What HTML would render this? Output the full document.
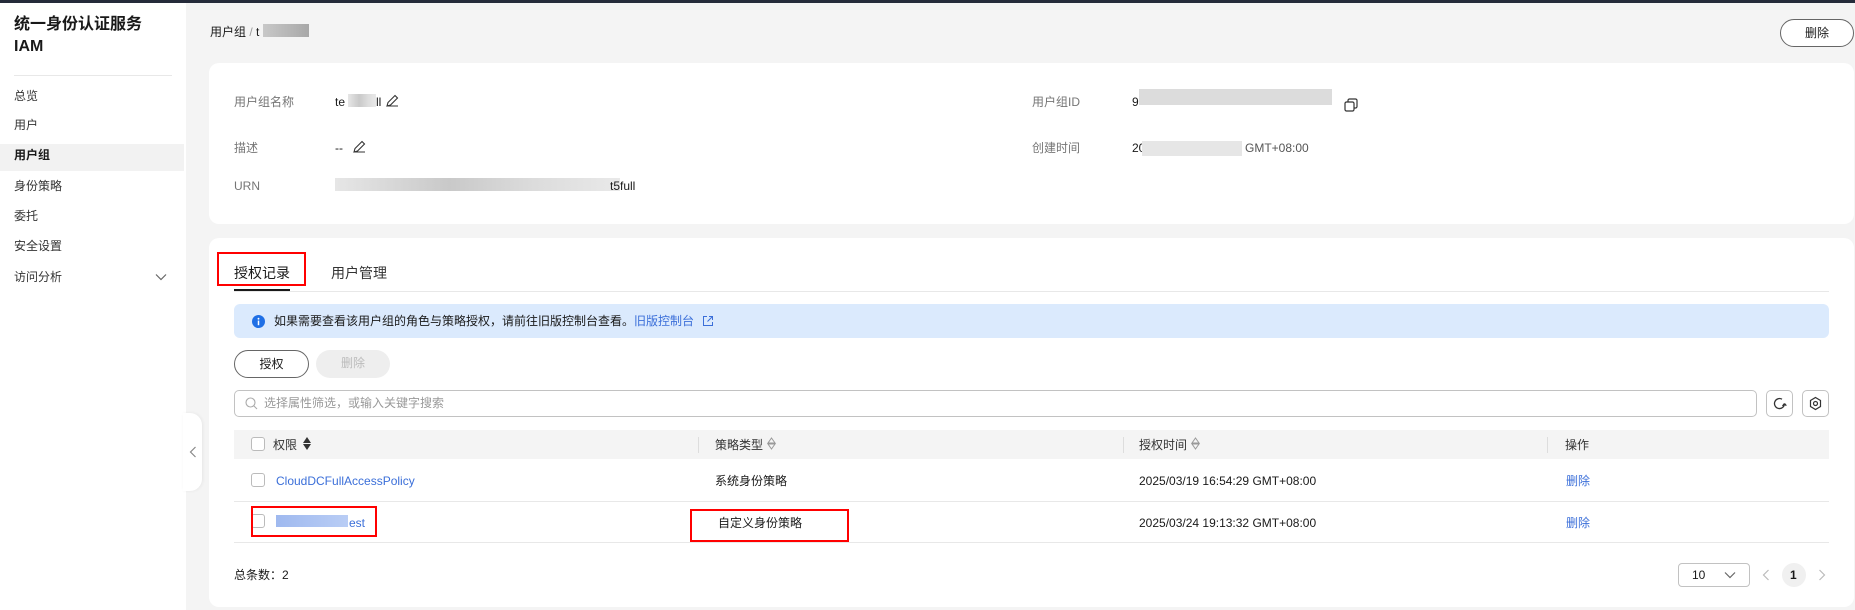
<!DOCTYPE html>
<html><head><meta charset="utf-8"><style>
*{margin:0;padding:0;box-sizing:border-box}
body{width:1855px;height:610px;overflow:hidden;background:#f4f4f4;font-family:"Liberation Sans","Noto Sans CJK SC",sans-serif;font-size:12px;color:#191919;position:relative}
.a{position:absolute;white-space:nowrap;line-height:1}
.top{position:absolute;left:0;top:0;width:1855px;height:3px;background:#252b3a}
.side{position:absolute;left:0;top:3px;width:186px;height:607px;background:#fff}
.nav{position:absolute;left:14px;font-size:12px;color:#333;transform:translateY(-50%)}
.card{position:absolute;background:#fff;border-radius:10px}
.lbl{color:#757575}
.blur{position:absolute;background:linear-gradient(90deg,#e6e6e6,#c9c9c9 40%,#dcdcdc 70%,#e9e9e9);}
.btn{position:absolute;border:1px solid #666;border-radius:16px;background:#fff;text-align:center}
.link{color:#3b6fd9}
.red{position:absolute;border:2px solid #f00}
.cb{position:absolute;width:14px;height:14px;border:1px solid #bbb;border-radius:3px;background:#fff}
.hdr{color:#333}
.sep{position:absolute;width:1px;height:16px;background:#ddd;top:437px}
</style></head><body>
<div class="top"></div>
<div class="side">
<div class="a" style="left:14px;top:11px;font-size:16px;font-weight:bold;line-height:22px">统一身份认证服务<br>IAM</div>
<div style="position:absolute;left:14px;top:72px;width:158px;height:1px;background:#e8e8e8"></div>
<div style="position:absolute;left:0;top:141px;width:184px;height:27px;background:#f2f2f2"></div>
<div class="a nav" style="top:93px">总览</div>
<div class="a nav" style="top:122px">用户</div>
<div class="a nav" style="top:152px;font-weight:bold;color:#191919">用户组</div>
<div class="a nav" style="top:183px">身份策略</div>
<div class="a nav" style="top:213px">委托</div>
<div class="a nav" style="top:243px">安全设置</div>
<div class="a nav" style="top:274px">访问分析</div>
<svg class="a" style="left:155px;top:270px" width="12" height="8" viewBox="0 0 12 8"><path d="M1 1.5l5 5 5-5" fill="none" stroke="#666" stroke-width="1.2"/></svg>
</div>
<div style="position:absolute;left:183px;top:413px;width:19px;height:78px;background:#fff;border-radius:0 12px 12px 0;box-shadow:1px 0 3px rgba(0,0,0,.06)"></div>
<svg class="a" style="left:189px;top:446px" width="8" height="12" viewBox="0 0 8 12"><path d="M6.5 1l-5 5 5 5" fill="none" stroke="#888" stroke-width="1.2"/></svg>

<div class="a" style="left:210px;top:26px">用户组 <span style="color:#999">/</span> t</div>
<div class="blur" style="left:263px;top:24px;width:46px;height:13px;background:linear-gradient(90deg,#c8c8c8,#a8a8a8)"></div>
<div class="btn" style="left:1780px;top:19px;width:74px;height:28px;line-height:26px">删除</div>

<div class="card" style="left:209px;top:63px;width:1645px;height:161px"></div>
<div class="a lbl" style="left:234px;top:96px">用户组名称</div>
<div class="a" style="left:335px;top:96px">te</div>
<div class="blur" style="left:348px;top:94px;width:28px;height:13px"></div>
<div class="a" style="left:376px;top:96px">ll</div>
<svg class="a" style="left:385px;top:94px" width="14" height="14" viewBox="0 0 14 14"><path d="M2 12l1-3.5 7-7 2.5 2.5-7 7z M2 12h11" fill="none" stroke="#333" stroke-width="1.1"/></svg>
<div class="a lbl" style="left:234px;top:142px">描述</div>
<div class="a" style="left:335px;top:142px">--</div>
<svg class="a" style="left:352px;top:140px" width="14" height="14" viewBox="0 0 14 14"><path d="M2 12l1-3.5 7-7 2.5 2.5-7 7z M2 12h11" fill="none" stroke="#333" stroke-width="1.1"/></svg>
<div class="a lbl" style="left:234px;top:180px">URN</div>
<div class="blur" style="left:335px;top:178px;width:285px;height:13px"></div>
<div class="a" style="left:610px;top:180px">t5full</div>
<div class="a lbl" style="left:1032px;top:96px">用户组ID</div>
<div class="a" style="left:1132px;top:96px">9</div>
<div class="blur" style="left:1139px;top:89px;width:193px;height:16px;background:#dcdcdc"></div>
<svg class="a" style="left:1343px;top:97px" width="16" height="16" viewBox="0 0 16 16"><rect x="2" y="5" width="9" height="9" rx="1.5" fill="none" stroke="#333" stroke-width="1.2"/><path d="M5 5V3.5A1.5 1.5 0 0 1 6.5 2h6A1.5 1.5 0 0 1 14 3.5v6a1.5 1.5 0 0 1-1.5 1.5H11" fill="none" stroke="#333" stroke-width="1.2"/></svg>
<div class="a lbl" style="left:1032px;top:142px">创建时间</div>
<div class="a" style="left:1132px;top:142px">20</div>
<div class="blur" style="left:1142px;top:141px;width:100px;height:15px;background:#e6e6e6"></div>
<div class="a" style="left:1245px;top:142px;color:#555">GMT+08:00</div>

<div class="card" style="left:209px;top:238px;width:1645px;height:369px"></div>
<div class="a" style="left:234px;top:266px;font-size:14px">授权记录</div>
<div style="position:absolute;left:234px;top:289px;width:56px;height:2px;background:#191919"></div>
<div class="a" style="left:331px;top:266px;font-size:14px;color:#333">用户管理</div>
<div style="position:absolute;left:234px;top:291px;width:1595px;height:1px;background:#e8e8e8"></div>
<div class="red" style="left:217px;top:252px;width:89px;height:34px"></div>

<div style="position:absolute;left:234px;top:304px;width:1595px;height:34px;background:#dbeafd;border-radius:6px"></div>
<svg class="a" style="left:252px;top:315px" width="13" height="13" viewBox="0 0 14 14"><circle cx="7" cy="7" r="7" fill="#1f6fe5"/><rect x="6.2" y="6" width="1.6" height="5" fill="#fff"/><circle cx="7" cy="4" r="1" fill="#fff"/></svg>
<div class="a" style="left:274px;top:315px">如果需要查看该用户组的角色与策略授权，请前往旧版控制台查看。<span class="link">旧版控制台</span></div>
<svg class="a" style="left:702px;top:315px" width="12" height="12" viewBox="0 0 12 12"><path d="M5 1.5H1.5v9h9V7 M7 1.5h3.5V5 M10.5 1.5L5.5 6.5" fill="none" stroke="#3b6fd9" stroke-width="1"/></svg>

<div class="btn" style="left:234px;top:350px;width:75px;height:28px;line-height:26px">授权</div>
<div class="btn" style="left:316px;top:350px;width:74px;height:28px;line-height:26px;border:none;background:#eee;color:#bbb">删除</div>

<div style="position:absolute;left:234px;top:390px;width:1523px;height:27px;border:1px solid #c2c2c2;border-radius:5px;background:#fff"></div>
<svg class="a" style="left:245px;top:397px" width="13" height="13" viewBox="0 0 13 13"><circle cx="5.5" cy="5.5" r="4.5" fill="none" stroke="#aaa" stroke-width="1.1"/><path d="M9 9l3 3" stroke="#aaa" stroke-width="1.1"/></svg>
<div class="a" style="left:264px;top:397px;color:#999">选择属性筛选，或输入关键字搜索</div>
<div style="position:absolute;left:1766px;top:390px;width:27px;height:27px;border:1px solid #c2c2c2;border-radius:5px"></div>
<svg class="a" style="left:1772px;top:396px" width="15" height="15" viewBox="0 0 15 15"><path d="M12.5 7.5A5 5 0 1 1 10 3.2" fill="none" stroke="#333" stroke-width="1.3"/><path d="M12.5 7.5l-2 2.5M12.5 7.5l1.8 2.2" fill="none" stroke="#333" stroke-width="1.3"/></svg>
<div style="position:absolute;left:1802px;top:390px;width:27px;height:27px;border:1px solid #c2c2c2;border-radius:5px"></div>
<svg class="a" style="left:1808px;top:396px" width="15" height="15" viewBox="0 0 15 15"><path d="M7.5 1.5l5 3v6l-5 3-5-3v-6z" fill="none" stroke="#333" stroke-width="1.2"/><circle cx="7.5" cy="7.5" r="2" fill="none" stroke="#333" stroke-width="1.2"/></svg>

<div style="position:absolute;left:234px;top:430px;width:1595px;height:29px;background:#f4f4f4"></div>
<div class="cb" style="left:251px;top:437px"></div>
<div class="a hdr" style="left:273px;top:439px">权限</div>
<svg class="a" style="left:303px;top:437px" width="8" height="13" viewBox="0 0 8 13"><path d="M4 0l4 6H0z M4 13l4-6H0z" fill="#333"/></svg>
<div class="sep" style="left:698px"></div>
<div class="a hdr" style="left:715px;top:439px">策略类型</div>
<svg class="a" style="left:767px;top:437px" width="9" height="13" viewBox="0 0 9 13"><path d="M4.5 1l3.5 5H1z M4.5 12l3.5-5H1z" fill="none" stroke="#999"/></svg>
<div class="sep" style="left:1123px"></div>
<div class="a hdr" style="left:1139px;top:439px">授权时间</div>
<svg class="a" style="left:1191px;top:437px" width="9" height="13" viewBox="0 0 9 13"><path d="M4.5 1l3.5 5H1z M4.5 12l3.5-5H1z" fill="none" stroke="#999"/></svg>
<div class="sep" style="left:1547px"></div>
<div class="a hdr" style="left:1565px;top:439px">操作</div>

<div class="cb" style="left:251px;top:473px"></div>
<div class="a link" style="left:276px;top:475px">CloudDCFullAccessPolicy</div>
<div class="a" style="left:715px;top:475px">系统身份策略</div>
<div class="a" style="left:1139px;top:475px">2025/03/19 16:54:29 GMT+08:00</div>
<div class="a link" style="left:1566px;top:475px">删除</div>
<div style="position:absolute;left:234px;top:501px;width:1595px;height:1px;background:#e8e8e8"></div>

<div class="cb" style="left:251px;top:514px"></div>
<div class="blur" style="left:276px;top:515px;width:72px;height:12px;background:linear-gradient(90deg,#9fb9ef,#b9cdf5)"></div>
<div class="a link" style="left:349px;top:517px">est</div>
<div class="a" style="left:718px;top:517px">自定义身份策略</div>
<div class="a" style="left:1139px;top:517px">2025/03/24 19:13:32 GMT+08:00</div>
<div class="a link" style="left:1566px;top:517px">删除</div>
<div style="position:absolute;left:234px;top:542px;width:1595px;height:1px;background:#e8e8e8"></div>
<div class="red" style="left:251px;top:506px;width:126px;height:31px"></div>
<div class="red" style="left:690px;top:509px;width:159px;height:33px"></div>

<div class="a" style="left:234px;top:569px">总条数：2</div>
<div style="position:absolute;left:1678px;top:563px;width:72px;height:24px;border:1px solid #c2c2c2;border-radius:4px"></div>
<div class="a" style="left:1692px;top:569px">10</div>
<svg class="a" style="left:1724px;top:571px" width="12" height="8" viewBox="0 0 12 8"><path d="M1 1.5l5 5 5-5" fill="none" stroke="#666" stroke-width="1.2"/></svg>
<svg class="a" style="left:1762px;top:569px" width="8" height="12" viewBox="0 0 8 12"><path d="M6.5 1l-5 5 5 5" fill="none" stroke="#bbb" stroke-width="1.2"/></svg>
<div style="position:absolute;left:1782px;top:563px;width:24px;height:24px;border-radius:12px;background:#f0f0f0"></div>
<div class="a" style="left:1790px;top:569px;font-weight:bold">1</div>
<svg class="a" style="left:1818px;top:569px" width="8" height="12" viewBox="0 0 8 12"><path d="M1.5 1l5 5-5 5" fill="none" stroke="#bbb" stroke-width="1.2"/></svg>
</body></html>
